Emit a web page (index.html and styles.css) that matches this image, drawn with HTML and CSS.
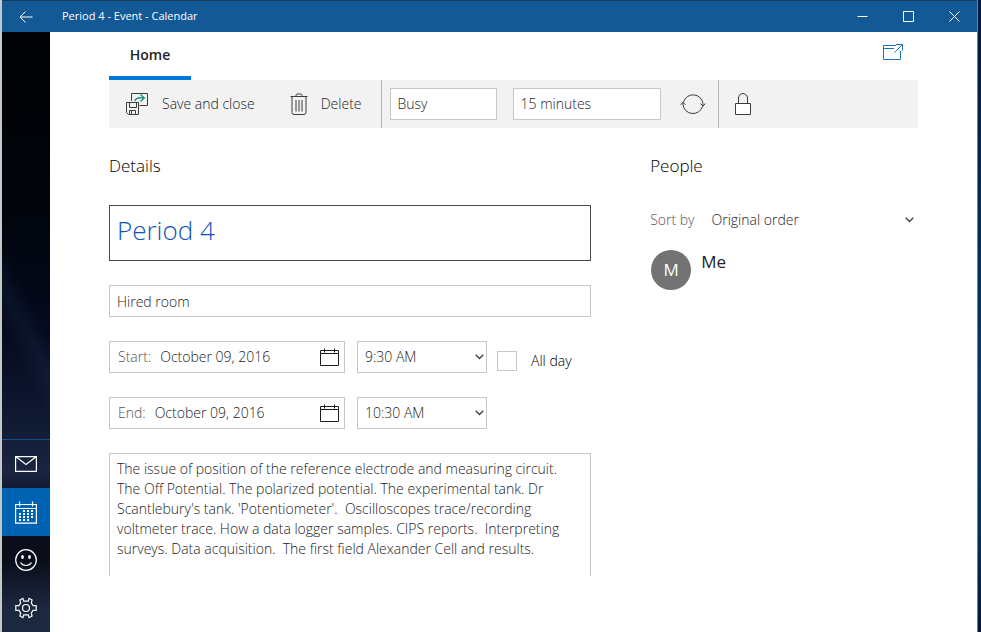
FILE: index.html
```html
<!DOCTYPE html>
<html lang="en">
<head>
    <meta charset="UTF-8">
    <meta name="viewport" content="width=device-width, initial-scale=1.0">
    <title>Period 4 - Event - Calendar</title>
    <link rel="stylesheet" href="styles.css">
</head>
<body>
    <div class="window">
        <!-- Title bar -->
        <header class="title-bar">
            <button class="title-btn back-btn" aria-label="Back">
                <svg width="14" height="12" viewBox="0 0 14 12"><path d="M6.5 .5 1 6l5.500 5.500M1 6h12.500"/></svg>
            </button>
            <h1 class="window-title">Period 4 - Event - Calendar</h1>
            <button class="title-btn" aria-label="Minimize">
                <svg width="11" height="11" viewBox="0 0 11 11"><path d="M.5 5.500h10"/></svg>
            </button>
            <button class="title-btn" aria-label="Maximize">
                <svg width="11" height="11" viewBox="0 0 11 11"><path d="M.5 .5h10v10H.5z"/></svg>
            </button>
            <button class="title-btn" aria-label="Close">
                <svg width="11" height="11" viewBox="0 0 11 11"><path d="M.5 .5l10 10M10.500 .5l-10 10"/></svg>
            </button>
        </header>

        <div class="app">
            <!-- App switcher -->
            <nav class="sidebar">
                <a class="nav-link nav-first" href="#mail" aria-label="Mail">
                    <svg width="22" height="16" viewBox="0 0 22 16"><path d="M.6 .6h20.800v14.800H.6zM.6 .6 11 8.500 21.400 .6"/></svg>
                </a>
                <a class="nav-link active" href="#calendar" aria-label="Calendar">
                    <svg width="22" height="23" viewBox="0 0 22 23">
                        <path d="M.6 3.500h20.800v18.700H.6zM.6 7.500h20.800M4.500 .5v5M17.500 .5v5"/>
                        <path stroke-width="2" stroke-dasharray="2 2" d="M8 10h10M4 13h14M4 16h14M4 19h10"/>
                    </svg>
                </a>
                <a class="nav-link" href="#feedback" aria-label="Feedback">
                    <svg width="22" height="22" viewBox="0 0 22 22">
                        <circle cx="11" cy="11" r="10.300"/>
                        <path d="M5.500 13.500c2.500 4 8.500 4 11 0"/>
                        <ellipse class="fill" cx="7.500" cy="8" rx="1.400" ry="2"/>
                        <ellipse class="fill" cx="14.500" cy="8" rx="1.400" ry="2"/>
                    </svg>
                </a>
                <a class="nav-link" href="#settings" aria-label="Settings">
                    <svg width="22" height="22" viewBox="0 0 22 22">
                        <path d="M8.700 4.100 7.900 1.300 4.900 3 5.700 5.900 4 8.700H.8v4.600H4l1.700 2.800-.8 2.900 3 1.700.8-2.800h4.600l.8 2.800 3-1.700-.8-2.900 1.700-2.800h3.200V8.700H18l-1.700-2.800.8-2.900-3-1.700-.8 2.800z"/>
                        <circle cx="11" cy="11" r="3.500"/>
                    </svg>
                </a>
            </nav>

            <main class="page">
                <div class="tabs">
                    <button class="tab">Home</button>
                    <button class="popout-btn" aria-label="Open in new window">
                        <svg width="22" height="18" viewBox="0 0 22 18"><path d="M14 2.500H1.500v14h17V8M1.500 5.500H12M12.500 9.500l8-8M14 1.500h6.500v6"/></svg>
                    </button>
                </div>

                <div class="toolbar">
                    <button class="tool-btn">
                        <svg width="24" height="24" viewBox="0 0 24 24">
                            <path d="M6.500 9V1.500h16v12h-8M1.500 10.500h12v12h-10l-2-2zM4.500 10.500v5h7v-5M4.500 22.500v-4h6v4M6.500 19v3"/>
                            <path class="teal" d="M10 9c.5-2.500 3-4 9-3M15.500 2.500 19.300 6l-3.800 3.500"/>
                        </svg>
                        Save and close
                    </button>
                    <button class="tool-btn">
                        <svg width="18" height="24" viewBox="0 0 18 24"><path d="M.5 4.500h17M6 4.500v-1q0-1.500 1.500-1.500h3q1.500 0 1.500 1.500v1M2 4.500v16q0 2 2 2h10q2 0 2-2v-16M6 8v11.500M9 8v11.500M12 8v11.500"/></svg>
                        Delete
                    </button>
                    <div class="tool-group">
                        <select class="field busy-select" aria-label="Show as">
                            <option>Busy</option>
                        </select>
                        <select class="field reminder-select" aria-label="Reminder">
                            <option>15 minutes</option>
                        </select>
                        <button class="icon-btn repeat-btn" aria-label="Repeat">
                            <svg width="26" height="24" viewBox="0 0 26 24"><path d="M3.500 10A10 10 0 0 1 23 11.500V14M22.500 14.500A10 10 0 0 1 3 12.500V10.500M.8 12.800 3 10.300l2.500 2.500M20.500 11.500l2.500 2.700 2.300-2.700"/></svg>
                        </button>
                    </div>
                    <div class="tool-group">
                        <button class="icon-btn lock-btn" aria-label="Private">
                            <svg width="18" height="24" viewBox="0 0 18 24"><path fill="#fff" d="M1.500 11.500h15v11h-15z"/><path d="M4.500 11V6a4.500 4.500 0 0 1 9 0v5"/></svg>
                        </button>
                    </div>
                </div>

                <div class="columns">
                    <section class="details">
                        <h2>Details</h2>
                        <input class="field title-field" type="text" value="Period 4" aria-label="Event name">
                        <input class="field" type="text" value="Hired room" aria-label="Location">

                        <div class="time-row">
                            <div class="field date-field">
                                <label for="startDate">Start:</label>
                                <input id="startDate" type="text" value="October 09, 2016">
                                <button aria-label="Choose start date">
                                    <svg width="19" height="19" viewBox="0 0 19 19"><path d="M.5 2.500h18v15H.5zM.5 5.500h18M4.500 .5v4M14.500 .5v4"/></svg>
                                </button>
                            </div>
                            <select class="field time-field" aria-label="Start time">
                                <option>9:30 AM</option>
                            </select>
                            <label class="all-day"><input type="checkbox">All day</label>
                        </div>

                        <div class="time-row">
                            <div class="field date-field">
                                <label for="endDate">End:</label>
                                <input id="endDate" type="text" value="October 09, 2016">
                                <button aria-label="Choose end date">
                                    <svg width="19" height="19" viewBox="0 0 19 19"><path d="M.5 2.500h18v15H.5zM.5 5.500h18M4.500 .5v4M14.500 .5v4"/></svg>
                                </button>
                            </div>
                            <select class="field time-field" aria-label="End time">
                                <option>10:30 AM</option>
                            </select>
                        </div>

                        <textarea class="field notes" aria-label="Event description">The issue of position of the reference electrode and measuring circuit. The Off Potential. The polarized potential. The experimental tank. Dr Scantlebury's tank. 'Potentiometer'.  Oscilloscopes trace/recording voltmeter trace. How a data logger samples. CIPS reports.  Interpreting surveys. Data acquisition.  The first field Alexander Cell and results.</textarea>
                    </section>

                    <section class="people">
                        <h2>People</h2>
                        <div class="sort-row">
                            <label for="sortBy">Sort by</label>
                            <select id="sortBy">
                                <option>Original order</option>
                            </select>
                        </div>
                        <div class="person">
                            <span class="avatar">M</span>
                            <span class="person-name">Me</span>
                        </div>
                    </section>
                </div>
            </main>
        </div>
    </div>
</body>
</html>
```
FILE: styles.css
```css
* {
    box-sizing: border-box;
    margin: 0;
    padding: 0;
}
body {
    min-height: 100vh;
    display: flex;
    padding-right: 3px;
    background: linear-gradient(#04183a, #002a5c 30%, #003a70 60%, #00305f 85%, #02163a);
    font-family: "Open Sans", "Noto Sans", sans-serif;
    font-size: 14px;
    font-weight: 300;
    line-height: 20px;
    color: #1c1c1c;
}
button, input, select, textarea {
    font: inherit;
    color: inherit;
}
button {
    background: none;
    border: none;
    cursor: pointer;
}
svg {
    display: block;
    flex: none;
    fill: none;
    stroke: currentColor;
}
.window {
    flex: 1;
    display: flex;
    flex-direction: column;
    border-left: 2px solid #c6c8c8;
    border-right: 1px solid #6d8192;
    background-color: white;
}

/* Title bar */
.title-bar {
    display: flex;
    height: 32px;
    background-color: #135995;
    border-top: 1px solid #17395c;
    color: white;
}
.window-title {
    flex: 1;
    padding-left: 12px;
    font-size: 11px;
    font-weight: 400;
    line-height: 30px;
}
.title-btn {
    width: 46px;
    display: flex;
    align-items: center;
    justify-content: center;
}
.back-btn {
    width: 48px;
}

/* Sidebar */
.app {
    flex: 1;
    display: flex;
}
.sidebar {
    width: 48px;
    display: flex;
    flex-direction: column;
    justify-content: flex-end;
    background:
        linear-gradient(62deg, transparent 44%, rgba(50,90,140,0.12) 50%, transparent 56%),
        linear-gradient(#000103, #01050d 30%, #050a1e 50%, #101a33 65%, #1a2543 73%, #0a0e1c 80%, #0a0e1a 88%, #1c2740 96%);
}
.nav-link {
    height: 48px;
    display: flex;
    align-items: center;
    justify-content: center;
    color: white;
}
.nav-link svg {
    stroke-width: 1.2;
}
.nav-link .fill {
    fill: white;
    stroke: none;
}
.nav-first {
    height: 49px;
    border-top: 1px solid #125086;
}
.nav-link.active {
    background-color: #0063b1;
}

/* Tabs and toolbar */
.page {
    flex: 1;
    min-width: 0;
    padding: 0 59px;
}
.tabs {
    height: 48px;
    display: flex;
    justify-content: space-between;
}
.tab {
    width: 82px;
    border-bottom: 4px solid #0078d7;
    padding-top: 2px;
    font-weight: 600;
    color: #222;
    text-align: center;
}
.popout-btn {
    padding: 0 14px 8px;
    color: #1a73c0;
}
.toolbar {
    height: 48px;
    display: flex;
    background-color: #f2f2f2;
}
.tool-btn {
    display: flex;
    align-items: center;
    gap: 13px;
    padding: 0 19px 0 16px;
    white-space: nowrap;
}
.tool-btn svg, .icon-btn svg {
    color: #3c3c3c;
}
.tool-btn .teal {
    stroke: #1f9484;
    stroke-width: 1.4;
}
.tool-group {
    display: flex;
    align-items: center;
    gap: 16px;
    padding: 0 12px 0 8px;
    border-left: 1px solid #b4b4b4;
}
.repeat-btn {
    padding-left: 3px;
}
.lock-btn {
    padding-left: 7px;
}

/* Form */
.field {
    display: block;
    width: 100%;
    height: 32px;
    border: 1px solid #c8c8c8;
    padding: 0 7px;
    background-color: white;
    appearance: none;
}
.busy-select {
    width: 107px;
}
.reminder-select {
    width: 148px;
}
.columns {
    display: grid;
    grid-template-columns: minmax(0, 9fr) minmax(0, 5fr);
    gap: 59px;
    padding-top: 24px;
}
.details {
    display: flex;
    flex-direction: column;
    gap: 24px;
}
h2 {
    margin-bottom: 2px;
    font-size: 17px;
    font-weight: 300;
    line-height: 27px;
    color: #000;
}
.title-field {
    height: 56px;
    border-color: #4a4a4a;
    padding-bottom: 6px;
    font-size: 26px;
    color: #0f54bb;
}
.time-row {
    display: flex;
}
.date-field {
    width: 236px;
    margin-right: 12px;
    display: flex;
    align-items: center;
    gap: 9px;
    padding: 0 5px 0 8px;
}
.date-field label {
    color: #555;
}
.date-field input {
    flex: 1;
    min-width: 0;
    border: none;
}
.time-field {
    width: 130px;
}
.time-field, .sort-row select {
    background: white url("data:image/svg+xml,%3Csvg xmlns='http://www.w3.org/2000/svg' width='9' height='6' fill='none' stroke='%23444' stroke-width='1.500'%3E%3Cpath d='M.7 .7 4.500 4.500 8.300 .7'/%3E%3C/svg%3E") no-repeat right 2px center;
}
.all-day {
    display: flex;
    align-items: center;
    gap: 14px;
    margin-left: 10px;
    padding-top: 8px;
    color: #000;
}
.all-day input {
    width: 20px;
    height: 20px;
    border: 1px solid #c8c8c8;
    appearance: none;
}
.notes {
    height: 123px;
    border-bottom: none;
    padding: 5px 7px;
    resize: none;
    overflow: hidden;
}

/* People */
.sort-row {
    display: flex;
    align-items: center;
    gap: 17px;
    margin-top: 31px;
    color: #555;
}
.sort-row select {
    flex: 1;
    border: none;
    background-position: right 4px center;
    color: #1c1c1c;
    appearance: none;
}
.person {
    display: flex;
    gap: 10px;
    margin-top: 20px;
    padding-left: 1px;
}
.avatar {
    width: 40px;
    height: 40px;
    border-radius: 50%;
    background-color: #737373;
    color: white;
    font-size: 17px;
    font-weight: 400;
    line-height: 40px;
    text-align: center;
}
.person-name {
    font-size: 17px;
    font-weight: 400;
    line-height: 24px;
    color: #222;
}
```
